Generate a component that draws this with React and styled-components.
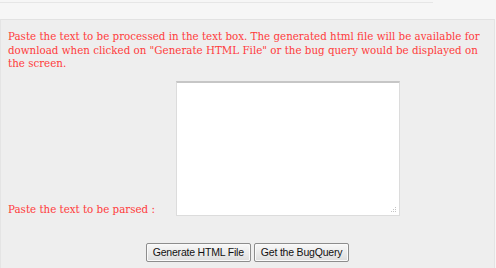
import React from 'react'
import styled, { createGlobalStyle } from 'styled-components'

const Global = createGlobalStyle`
html, body {
  margin: 0;
  padding: 0;
  background: #f6f6f6;
  height: 268px;
  overflow: hidden;
}
`

const Page = styled.div`
width: 496px;
height: 268px;
display: flex;
flex-direction: column;
`

const TopStrip = styled.div`
height: 19px;
box-sizing: border-box;
padding-top: 2px;
`

const TopRule = styled.div`
width: 433px;
height: 1px;
background: #e6e6e6;
`

const Panel = styled.div`
flex: 1;
width: 495px;
box-sizing: border-box;
background: #eeeeee;
border-top: 1px solid #e2e2e2;
border-left: 1px solid #e4e4e4;
border-right: 1px solid #e4e4e4;
padding: 10px 0 0 7px;
display: flex;
flex-direction: column;
`

const Intro = styled.p`
margin: 0;
font-family: "DejaVu Serif", serif;
font-size: 10.3px;
line-height: 13.5px;
color: #ff3b3b;
padding-right: 6px;
`

const Form = styled.div`
display: grid;
grid-template-columns: 168px 224px;
align-items: end;
margin-top: 10px;
`

const Label = styled.label`
font-family: "DejaVu Serif", serif;
font-size: 10.3px;
color: #ff3b3b;
padding-bottom: 1px;
`

const BoxWrap = styled.div`
position: relative;
width: 224px;
height: 135px;
`

const TextBox = styled.textarea`
display: block;
width: 224px;
height: 135px;
box-sizing: border-box;
margin: 0;
background: #fff;
border: 1px solid #dcdcdc;
border-top: 2px solid #c6c6c6;
resize: none;
outline: none;
`

const Grip = styled.svg`
position: absolute;
right: 3px;
bottom: 3px;
width: 6px;
height: 6px;
pointer-events: none;
`

const Actions = styled.div`
display: flex;
justify-content: center;
gap: 3px;
margin-top: 27px;
margin-left: -7px;
`

const Button = styled.button`
height: 19px;
padding: 0 6px;
font-family: "Liberation Sans", Arial, sans-serif;
font-size: 10.5px;
letter-spacing: -0.2px;
color: #111;
background: linear-gradient(#f8f8f8, #dedede);
border: 1px solid #8d8d8d;
border-radius: 2px;
box-shadow: inset 0 0 0 1px #fafafa;
`

export default function App() {
  return (
    <Page>
      <Global />
      <TopStrip>
        <TopRule />
      </TopStrip>
      <Panel>
        <Intro>
          Paste the text to be processed in the text box. The generated html file will be available for download when clicked on "Generate HTML File" or the bug query would be displayed on the screen.
        </Intro>
        <Form>
          <Label>Paste the text to be parsed :</Label>
          <BoxWrap>
            <TextBox />
            <Grip viewBox="0 0 6 6">
              <g fill="#c4c4c4">
                <rect x="4" y="0" width="1" height="1" />
                <rect x="2" y="2" width="1" height="1" />
                <rect x="4" y="2" width="1" height="1" />
                <rect x="0" y="4" width="1" height="1" />
                <rect x="2" y="4" width="1" height="1" />
                <rect x="4" y="4" width="1" height="1" />
              </g>
            </Grip>
          </BoxWrap>
        </Form>
        <Actions>
          <Button>Generate HTML File</Button>
          <Button>Get the BugQuery</Button>
        </Actions>
      </Panel>
    </Page>
  )
}
